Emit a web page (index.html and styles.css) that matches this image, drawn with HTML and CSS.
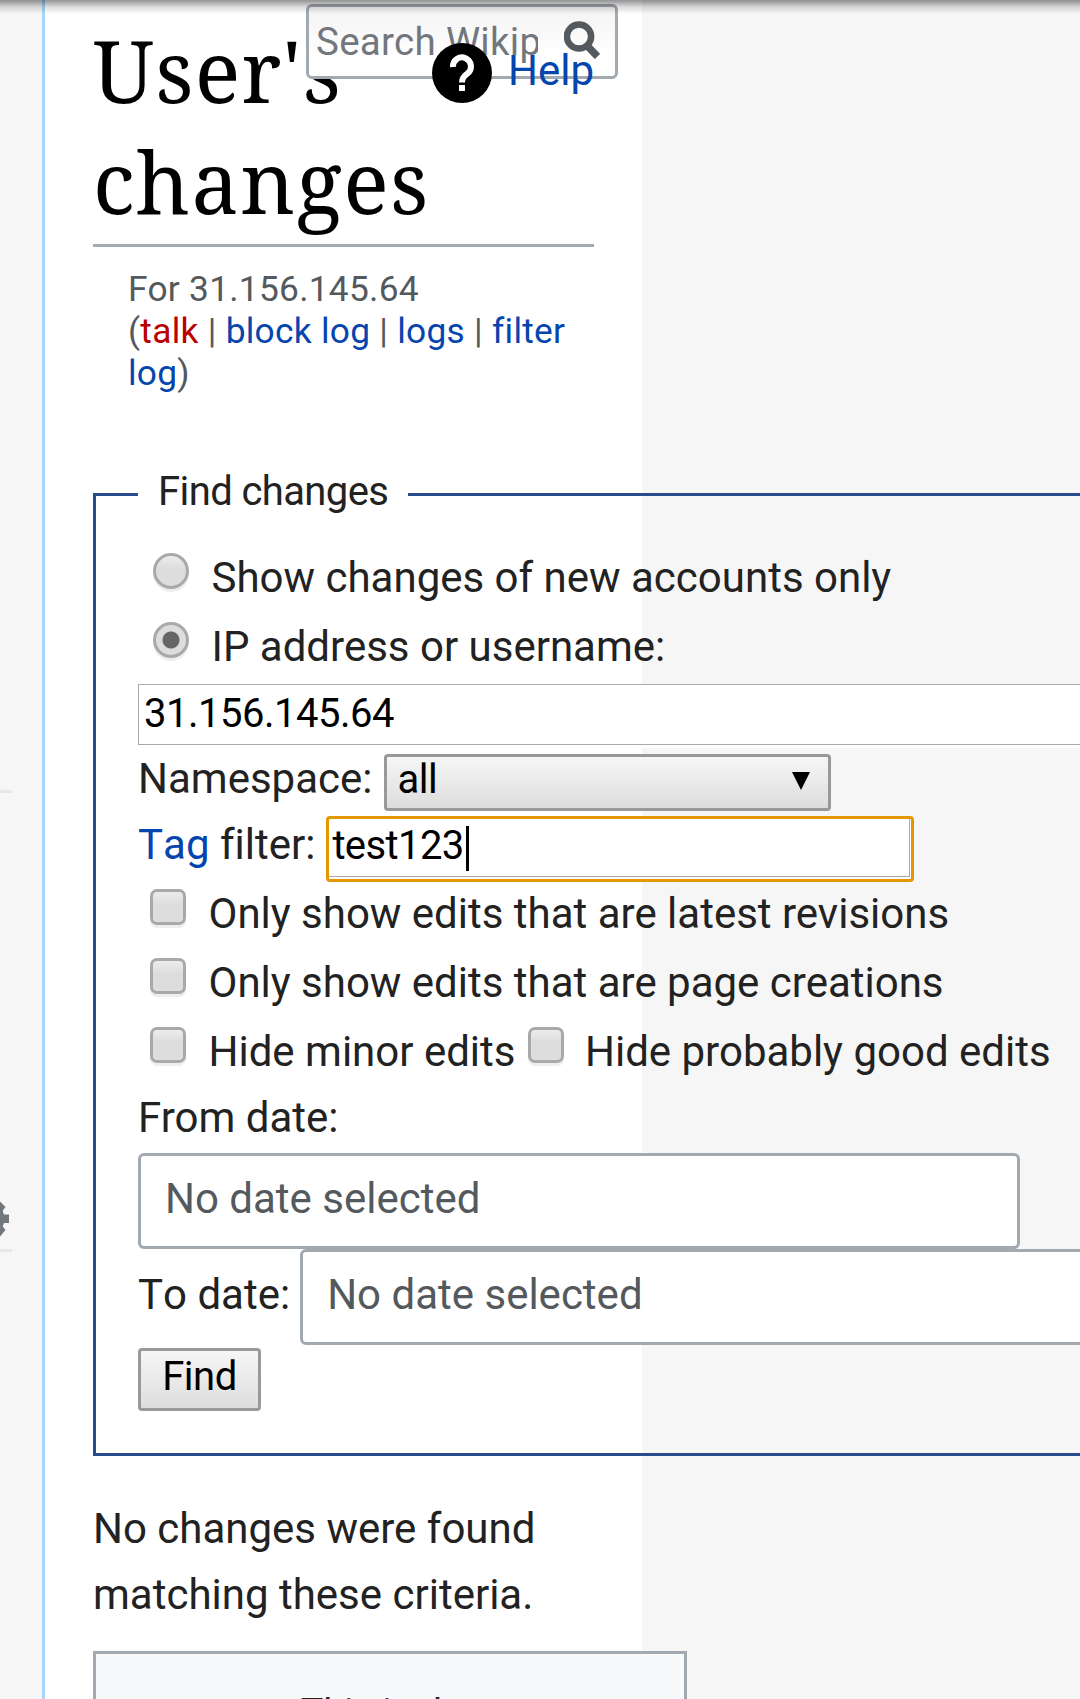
FILE: index.html
```html
<!DOCTYPE html>
<html lang="en">
<head>
<meta charset="utf-8">
<title>User's changes</title>
<link rel="stylesheet" href="styles.css">
</head>
<body>
<div class="page">
  <div class="topshadow"></div>
  <aside class="side">
    <div class="side-rule first"></div>
    <svg class="gear" viewBox="0 0 12 40"><path d="M0 2.500L5.500 8L2.800 11.500Q3 13.500 4 15.500H9V24H4Q3 26 2.800 27.500L5.500 31L0 37.500Z"/></svg>
    <div class="side-rule"></div>
  </aside>
  <main class="content">
    <div class="search"><span class="search-text">Search Wikip</span><svg class="lens" viewBox="0 0 36 38"><circle cx="15" cy="15.500" r="12.100"/><path d="M22 23.500L33.500 35.500"/></svg></div>
    <div class="help"><svg class="help-icon" viewBox="0 0 60 60"><circle cx="30" cy="30" r="30"/><path d="M21 24A9 9 0 1 1 35.500 30.500Q30 34 30 39.500"/><rect x="27" y="42" width="6" height="6"/></svg><a>Help</a></div>
    <h1>User's changes</h1>
    <p class="sub">For 31.156.145.64<br>(<a class="red">talk</a> | <a>block log</a> | <a>logs</a> | <a>filter log</a>)</p>
    <fieldset class="form">
      <legend>Find changes</legend>
      <div class="row"><span class="radio"></span>Show changes of new accounts only</div>
      <div class="row"><span class="radio on"></span>IP address or username:</div>
      <div class="field ip">31.156.145.64</div>
      <div class="line ns">Namespace: <span class="select">all<svg class="tri" viewBox="0 0 18 18"><path d="M0 0H18L9 18Z"/></svg></span></div>
      <div class="line tag"><span><a>Tag</a> filter:</span><span class="tagbox"><span class="tagfield">test123<span class="caret"></span></span></span></div>
      <div class="row"><span class="check"></span>Only show edits that are latest revisions</div>
      <div class="row"><span class="check"></span>Only show edits that are page creations</div>
      <div class="row"><span class="check"></span>Hide minor edits<span class="check second"></span>Hide probably good edits</div>
      <div class="from">From date:</div>
      <div class="date">No date selected</div>
      <div class="line to">To date: <span class="date wide">No date selected</span></div>
      <span class="button">Find</span>
    </fieldset>
    <p class="none">No changes were found matching these criteria.</p>
    <div class="notice">This is the</div>
  </main>
</div>
</body>
</html>
```
FILE: styles.css
```css
* { box-sizing: border-box; }
body { margin: 0; background: #f6f6f6; font: 42px/66px Roboto, sans-serif; color: #222; }
a { color: #0645ad; }
a.red { color: #ba0000; }
.page { position: relative; width: 1080px; height: 1699px; overflow: hidden; display: flex; }
.topshadow { position: absolute; z-index: 5; left: 0; top: 0; width: 1080px; height: 14px; background: linear-gradient(rgba(0,0,0,.42), rgba(0,0,0,.14) 50%, rgba(0,0,0,0)); }
.side { width: 42px; flex: none; padding-top: 790px; }
.side-rule { width: 12px; height: 3px; background: #e8e8e8; }
.side-rule.first { margin-bottom: 406px; }
.gear { display: block; width: 12px; height: 40px; margin-bottom: 10px; fill: #72777d; }
.content { width: 600px; flex: none; height: 1699px; background: #fff; border-left: 3px solid #a7d7f9; padding: 15px 48px 0; }
.search { position: absolute; z-index: 2; left: 306px; top: 4px; width: 312px; height: 75px; border: 3px solid #a2a9b1; border-radius: 6px; background: linear-gradient(#f3f3f3, #fff 70%); }
.search-text { position: absolute; left: 7px; top: 2px; width: 222px; height: 66px; overflow: hidden; white-space: nowrap; font-size: 38.500px; letter-spacing: .3px; color: #72777d; }
.lens { position: absolute; left: 255px; top: 14px; width: 36px; height: 38px; fill: none; stroke: #54595d; stroke-width: 6.500; }
.lens path { stroke-width: 7.500; }
.help { position: absolute; z-index: 3; left: 432px; top: 43px; display: flex; align-items: center; gap: 16px; height: 60px; }
.help a { margin-top: -4px; }
.help-icon { width: 60px; height: 60px; }
.help-icon path { fill: none; stroke: #fff; stroke-width: 6; }
.help-icon rect { fill: #fff; }
h1 { margin: 0; height: 232px; border-bottom: 3px solid #a2a9b1; font: 85px/111px "Noto Serif", "Droid Serif", "DejaVu Serif Condensed", serif; letter-spacing: 1.2px; color: #000; }
.sub { margin: 21px 0 0; padding-left: 35px; width: 500px; font-size: 35.300px; letter-spacing: .27px; line-height: 42px; color: #54595d; }
.form { margin: 66px 0 0; width: 1300px; height: 996px; border: 3px solid #2a4b8d; padding: 14px 42px 0; }
legend { padding: 0 20px 5px; line-height: 64px; font-size: 40px; letter-spacing: -.6px; }
.row { display: flex; height: 69px; line-height: 69px; white-space: nowrap; }
.radio, .check { width: 36px; height: 36px; margin: 10px 22.500px 0 15px; flex: none; border: 3px solid #a9a9a9; border-radius: 50%; background: linear-gradient(#ededed, #ddd 40%); box-shadow: 0 3px 0 #eee; }
.check { border-radius: 7px; margin: 10px 22.500px 0 12px; }
.check.second { margin: 10px 21px 0 12.500px; }
.radio.on { background: radial-gradient(circle, #666 8px, #ddd 9px); }
.field { width: 1200px; height: 61px; margin-top: 3px; border: 1px solid #a9a9a9; background: #fff; padding-left: 5px; line-height: 57px; font-size: 40px; letter-spacing: -.5px; color: #000; box-shadow: 0 3px 0 #fff; }
.line { display: flex; white-space: nowrap; }
.ns { height: 69px; line-height: 68px; }
.select { position: relative; width: 447px; height: 57px; margin: 9px 0 0 12px; border: 3px solid #999; border-radius: 4px; background: linear-gradient(#f6f6f6, #ddd); color: #000; padding-left: 10px; line-height: 45px; font-size: 40px; letter-spacing: -.5px; }
.tri { position: absolute; right: 18px; top: 15px; width: 18px; height: 18px; }
.tag { height: 65px; line-height: 61px; font-kerning: none; font-variant-ligatures: none; }
.tagbox { width: 588px; height: 66px; margin: 2px 0 0 11px; border: 3px solid #e59700; border-radius: 4px; background: #fff; }
.tagfield { display: block; height: 58px; margin-right: 1px; padding-left: 3px; border: solid #a9a9a9; border-width: 0 1px 1px 0; line-height: 53px; font-size: 40px; letter-spacing: -.6px; color: #000; }
.caret { display: inline-block; width: 3px; height: 45px; background: #000; vertical-align: -12px; margin-left: 2px; }
.from { height: 67px; line-height: 63px; }
.date { width: 882px; height: 96px; border: 3px solid #a2a9b1; border-radius: 6px; background: #fff; padding-left: 24px; line-height: 85px; color: #54595d; }
.to { line-height: 91px; height: 99px; font-kerning: none; }
.date.wide { margin-left: 10px; }
.button { display: block; width: 123px; height: 63px; border: 3px solid #999; border-radius: 4px; background: linear-gradient(#f6f6f6, #ddd); color: #000; text-align: center; line-height: 51px; font-size: 40px; letter-spacing: -.5px; }
.none { margin: 40px 0 0; width: 500px; }
.notice { margin-top: 23px; width: 594px; height: 200px; border: 3px solid #a2a9b1; background: #f8f9fa; padding: 26px 0 0 202px; font-size: 39px; font-style: italic; }
```
